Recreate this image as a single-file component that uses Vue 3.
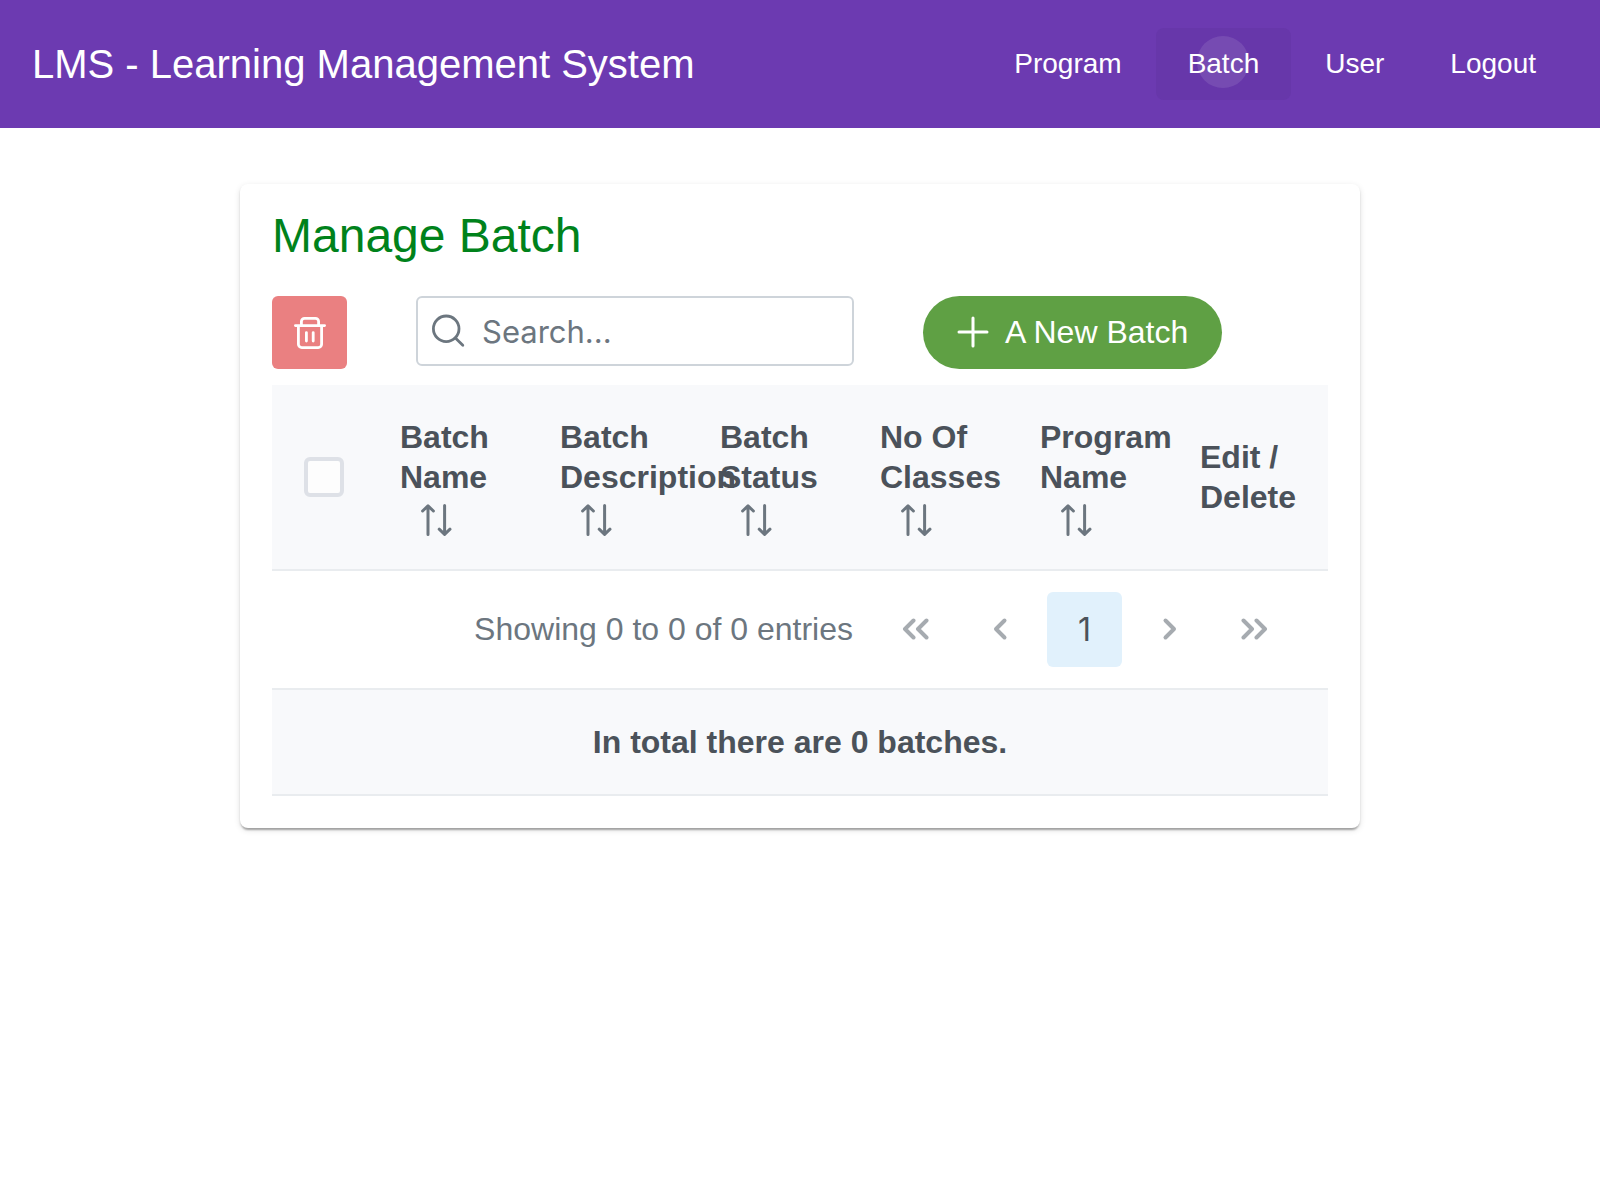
<script setup>
import { ref } from 'vue'

const links = ['Program', 'Batch', 'User', 'Logout']
const active = 'Batch'
const columns = [
  'Batch Name',
  'Batch Description',
  'Batch Status',
  'No Of Classes',
  'Program Name',
]
const search = ref('')
const batches = ref([])
const allSelected = ref(false)
</script>

<template>
  <div class="page">
    <header class="toolbar">
      <span class="brand">LMS - Learning Management System</span>
      <nav class="nav">
        <button
          v-for="link in links"
          :key="link"
          type="button"
          class="nav-button"
          :class="{ active: link === active }"
        >
          {{ link }}
        </button>
      </nav>
    </header>

    <main class="card">
      <h1 class="title">Manage Batch</h1>

      <div class="actions">
        <button type="button" class="delete" aria-label="Delete selected" disabled>
          <svg width="32" height="32" viewBox="0 0 32 32" fill="none" stroke="currentColor" stroke-width="2.8" stroke-linecap="round" stroke-linejoin="round">
            <path d="M1.4 8.6h29.2M7.4 8.6V4.6a3.2 3.2 0 0 1 3.2-3.2h10.8a3.2 3.2 0 0 1 3.2 3.2v4M4.4 8.8v18.4a3.4 3.4 0 0 0 3.4 3.4h16.4a3.4 3.4 0 0 0 3.4-3.4V8.8M12.4 15.6v8.4M19.2 15.6v8.4" />
          </svg>
        </button>

        <label class="search">
          <svg width="34" height="34" viewBox="0 0 34 34" fill="none" stroke="currentColor" stroke-width="2.8" stroke-linecap="round" aria-hidden="true">
            <circle cx="14.2" cy="14.8" r="12.8" />
            <path d="M23.4 24l7.4 7.2" />
          </svg>
          <input v-model="search" type="text" placeholder="Search..." aria-label="Search" />
        </label>

        <button type="button" class="create">
          <svg width="32" height="32" viewBox="0 0 32 32" fill="none" stroke="currentColor" stroke-width="3" stroke-linecap="round" aria-hidden="true">
            <path d="M16 2v28M2 16h28" />
          </svg>
          <span>A New Batch</span>
        </button>
      </div>

      <table class="grid">
        <thead>
          <tr>
            <th class="check-column">
              <input v-model="allSelected" type="checkbox" class="check" aria-label="Select all" />
            </th>
            <th v-for="column in columns" :key="column" scope="col">
              {{ column }}
              <button type="button" class="sort" :aria-label="'Sort by ' + column">
                <svg width="32" height="40" viewBox="0 0 32 40" fill="none" stroke="currentColor" stroke-width="3" stroke-linecap="round" stroke-linejoin="round">
                  <path d="M8 9v28.5M2.6 14L8 8.8l5.4 5.2M24.6 8.5V37M19.2 32.2l5.4 5.2 5.4-5.2" />
                </svg>
              </button>
            </th>
            <th scope="col">Edit / Delete</th>
          </tr>
        </thead>
      </table>

      <div class="paginator">
        <span class="summary">Showing 0 to 0 of {{ batches.length }} entries</span>
        <div class="pages">
          <button type="button" class="page-button" aria-label="First page" disabled>
            <svg width="28" height="24" viewBox="0 0 28 24"><path d="M12.5 3.5L4 12l8.5 8.5M25.5 3.5L17 12l8.5 8.5" /></svg>
          </button>
          <button type="button" class="page-button" aria-label="Previous page" disabled>
            <svg width="28" height="24" viewBox="0 0 28 24"><path d="M18.5 3.5L10 12l8.5 8.5" /></svg>
          </button>
          <button type="button" class="page-button current" aria-current="page">1</button>
          <button type="button" class="page-button" aria-label="Next page" disabled>
            <svg width="28" height="24" viewBox="0 0 28 24"><path d="M9.5 3.5L18 12l-8.5 8.5" /></svg>
          </button>
          <button type="button" class="page-button" aria-label="Last page" disabled>
            <svg width="28" height="24" viewBox="0 0 28 24"><path d="M2.5 3.5L11 12l-8.5 8.5M15.5 3.5L24 12l-8.5 8.5" /></svg>
          </button>
        </div>
      </div>

      <div class="total">In total there are {{ batches.length }} batches.</div>
    </main>
  </div>
</template>

<style>
body {
  background: #fff;
}
</style>

<style scoped>
.page {
  font-family: "Liberation Sans", Arial, sans-serif;
  font-size: 32px;
  line-height: 40px;
  color: #4b525a;
}

button,
input {
  margin: 0;
  box-sizing: border-box;
  font: inherit;
}

button {
  padding: 0;
  border: 0;
  background: none;
  color: inherit;
}

svg {
  display: block;
  flex: none;
}

.toolbar {
  display: flex;
  align-items: center;
  justify-content: space-between;
  box-sizing: border-box;
  height: 128px;
  padding: 0 32px;
  background: #6c3ab1;
  color: #fff;
}

.brand {
  font-size: 40px;
}

.nav {
  display: flex;
  gap: 2px;
}

.nav-button {
  position: relative;
  height: 72px;
  padding: 0 32px;
  border-radius: 8px;
  font-size: 28px;
}

.nav-button.active {
  background: #6737aa;
}

.nav-button.active::after {
  content: "";
  position: absolute;
  top: 8px;
  left: calc(50% - 26px);
  width: 52px;
  height: 52px;
  border-radius: 50%;
  background: rgba(255, 255, 255, 0.1);
}

.card {
  box-sizing: border-box;
  width: 70%;
  margin: 56px auto;
  padding: 16px 32px 32px;
  border-radius: 8px;
  background: #fff;
  box-shadow:
    0 4px 2px -2px rgba(0, 0, 0, 0.2),
    0 2px 2px rgba(0, 0, 0, 0.14),
    0 2px 6px rgba(0, 0, 0, 0.12);
}

.title {
  margin: 0 0 24px;
  font-size: 48px;
  font-weight: 400;
  line-height: 72px;
  color: #00821b;
}

.actions {
  display: flex;
  align-items: flex-start;
  gap: 69px;
  margin-bottom: 16px;
}

.delete {
  display: flex;
  align-items: center;
  justify-content: center;
  width: 75px;
  height: 73px;
  border-radius: 6px;
  background: #ea8081;
  color: #fff;
}

.search {
  display: flex;
  align-items: center;
  gap: 16px;
  box-sizing: border-box;
  width: 438px;
  height: 70px;
  padding: 0 14px;
  border: 2px solid #ced4da;
  border-radius: 6px;
  color: #6c767f;
}

.search input {
  flex: 1;
  min-width: 0;
  height: 60px;
  padding: 0;
  border: 0;
  outline: 0;
  background: none;
  font-family: Inter, sans-serif;
  font-size: 31px;
  color: #4b525a;
}

.search input::placeholder {
  color: #6c767f;
  opacity: 1;
}

.create {
  display: flex;
  align-items: center;
  gap: 16px;
  height: 73px;
  padding: 0 34px 1px;
  border-radius: 37px;
  background: #5fa044;
  color: #fff;
  white-space: nowrap;
}

.grid {
  width: 100%;
  table-layout: fixed;
  border-collapse: separate;
  border-spacing: 0;
}

.grid th {
  padding: 32px;
  border-bottom: 2px solid #e9ecef;
  background: #f8f9fb;
  text-align: left;
  vertical-align: middle;
}

.grid .check-column {
  width: 32px;
}

.check {
  display: block;
  appearance: none;
  width: 40px;
  height: 40px;
  border: 4px solid #dee1e7;
  border-radius: 6px;
  background: #fdfdfd;
}

.sort {
  height: 40px;
  margin-left: 20px;
  vertical-align: top;
  color: #6c767f;
}

.paginator {
  display: flex;
  align-items: center;
  justify-content: flex-end;
  gap: 24px;
  padding: 21px 36px 21px 0;
  border-bottom: 2px solid #e9ecef;
}

.summary {
  padding-bottom: 1px;
  color: #6c767f;
}

.pages {
  display: flex;
  gap: 10px;
}

.page-button {
  display: flex;
  align-items: center;
  justify-content: center;
  width: 75px;
  height: 75px;
  padding-bottom: 1px;
  border-radius: 6px;
  color: #a6abb0;
}

.page-button path {
  fill: none;
  stroke: currentColor;
  stroke-width: 4;
  stroke-linecap: round;
  stroke-linejoin: round;
}

.page-button.current {
  padding: 0;
  background: #e1f1fc;
  font-family: Inter, sans-serif;
  color: #4b525a;
}

.total {
  padding: 32px;
  border-bottom: 2px solid #e9ecef;
  background: #f8f9fb;
  font-weight: 700;
  text-align: center;
}
</style>
